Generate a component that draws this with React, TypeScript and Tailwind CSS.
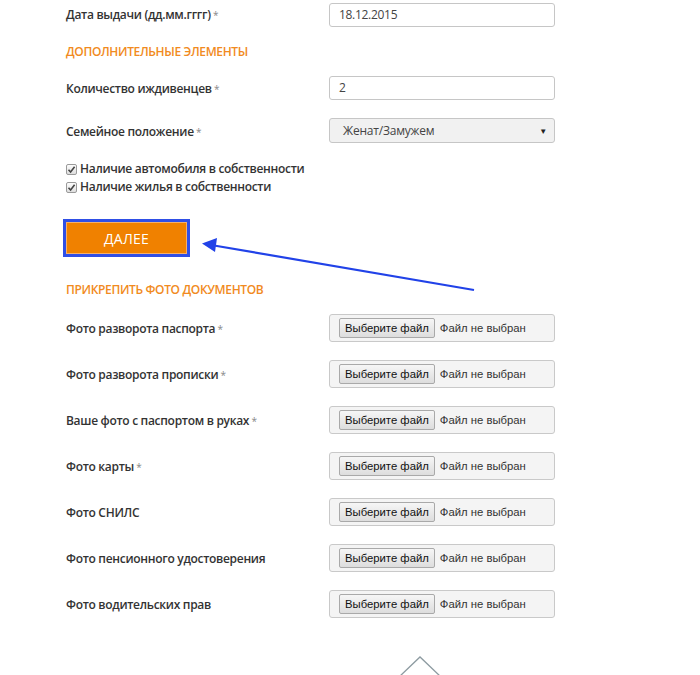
import React from "react";

const FILE_ROWS = [
  { label: "Фото разворота паспорта", required: true },
  { label: "Фото разворота прописки", required: true },
  { label: "Ваше фото с паспортом в руках", required: true },
  { label: "Фото карты", required: true },
  { label: "Фото СНИЛС", required: false },
  { label: "Фото пенсионного удостоверения", required: false },
  { label: "Фото водительских прав", required: false },
];

function Label({ text, required }: { text: string; required?: boolean }) {
  return (
    <span className="text-[12px] font-semibold text-[#333] tracking-[-0.3px]">
      {text}
      {required && <span className="font-normal text-[10px] text-[#888]"> *</span>}
    </span>
  );
}

function Heading({ children, className = "" }: { children: React.ReactNode; className?: string }) {
  return (
    <div className={`h-[16px] leading-[16px] text-[12px] font-semibold tracking-[-0.35px] text-[#f18a21] ${className}`}>
      {children}
    </div>
  );
}

function CheckBox() {
  return (
    <span className="w-[11px] h-[11px] rounded-[2px] border border-[#9a9a9a] bg-gradient-to-b from-[#fdfdfd] to-[#dedede] flex items-center justify-center shrink-0">
      <svg width="9" height="9" viewBox="0 0 9 9">
        <path d="M1.5 4.8 L3.6 7 L7.6 1.8" fill="none" stroke="#444" strokeWidth="1.6" />
      </svg>
    </span>
  );
}

function FileInput() {
  return (
    <div className="h-[28px] w-[226px] rounded-[3px] border border-[#c9c9c9] bg-[#f4f4f4] flex items-center pl-[9px] gap-[5px] font-['Liberation_Sans',Arial,sans-serif] text-[11.3px] text-[#333]">
      <span className="h-[20px] px-[5px] flex items-center rounded-[2px] border border-[#a9a9a9] bg-gradient-to-b from-[#f6f6f6] to-[#dddddd] text-[#111]">
        Выберите файл
      </span>
      <span>Файл не выбран</span>
    </div>
  );
}

export default function App() {
  return (
    <div className="relative w-[700px] h-[675px] overflow-hidden bg-white font-['Open_Sans',sans-serif]">
      <div className="pl-[66px] pt-[3px] flex flex-col">
        {/* Date */}
        <div className="flex items-center h-[24px]">
          <div className="w-[263px] pb-[4px]">
            <Label text="Дата выдачи (дд.мм.гггг)" required />
          </div>
          <div className="w-[226px] h-[24px] rounded-[3px] border border-[#c6c6c6] bg-white flex items-center px-[9px] text-[12px] text-[#444] tracking-[-0.3px]">
            18.12.2015
          </div>
        </div>

        <Heading className="mt-[17px]">ДОПОЛНИТЕЛЬНЫЕ ЭЛЕМЕНТЫ</Heading>

        <div className="flex items-center h-[24px] mt-[16px]">
          <div className="w-[263px] pb-[2px]">
            <Label text="Количество иждивенцев" required />
          </div>
          <div className="w-[226px] h-[24px] rounded-[3px] border border-[#c6c6c6] bg-white flex items-center px-[9px] text-[12px] text-[#444]">
            2
          </div>
        </div>

        <div className="flex items-center h-[25px] mt-[18px]">
          <div className="w-[263px] pb-[2px]">
            <Label text="Семейное положение" required />
          </div>
          <div className="w-[226px] h-[25px] rounded-[3px] border border-[#c6c6c6] bg-[#f1f1f1] flex items-center justify-between pl-[13px] pr-[7px] text-[12px] text-[#444] tracking-[-0.2px]">
            <span>Женат/Замужем</span>
            <span className="text-[8px] text-[#222]">▼</span>
          </div>
        </div>

        <div className="mt-[17px] flex flex-col">
          <label className="h-[18px] flex items-center gap-[3px] text-[12px] font-semibold text-[#333] tracking-[-0.3px]">
            <CheckBox />
            Наличие автомобиля в собственности
          </label>
          <label className="h-[18px] flex items-center gap-[3px] text-[12px] font-semibold text-[#333] tracking-[-0.3px]">
            <CheckBox />
            Наличие жилья в собственности
          </label>
        </div>

        <button className="mt-[23px] -ml-[3px] w-[127px] h-[38px] border-[3px] border-[#2f4fe6] bg-[#f08100] text-white text-[14px] tracking-[0.2px] flex items-center justify-center shadow-[inset_0_0_0_1px_#f5b06a]">
          ДАЛЕЕ
        </button>

        <Heading className="mt-[25px]">ПРИКРЕПИТЬ ФОТО ДОКУМЕНТОВ</Heading>

        <div className="mt-[16px] flex flex-col gap-[18px]">
          {FILE_ROWS.map((row) => (
            <div key={row.label} className="flex items-center h-[28px]">
              <div className="w-[263px] pb-[3px]">
                <Label text={row.label} required={row.required} />
              </div>
              <FileInput />
            </div>
          ))}
        </div>

        <div className="mt-[38px] ml-[332px]">
          <svg width="44" height="22" viewBox="0 0 44 22">
            <polyline points="1,21 22,1 43,21" fill="none" stroke="#8d9ba1" strokeWidth="1.3" />
          </svg>
        </div>
      </div>

      {/* pointer arrow */}
      <svg className="absolute left-0 top-0 pointer-events-none" width="700" height="675">
        <line x1="474" y1="290" x2="214" y2="245.5" stroke="#2142e8" strokeWidth="2.2" />
        <polygon points="202,243.5 217,238 215,252" fill="#2142e8" />
      </svg>
    </div>
  );
}
